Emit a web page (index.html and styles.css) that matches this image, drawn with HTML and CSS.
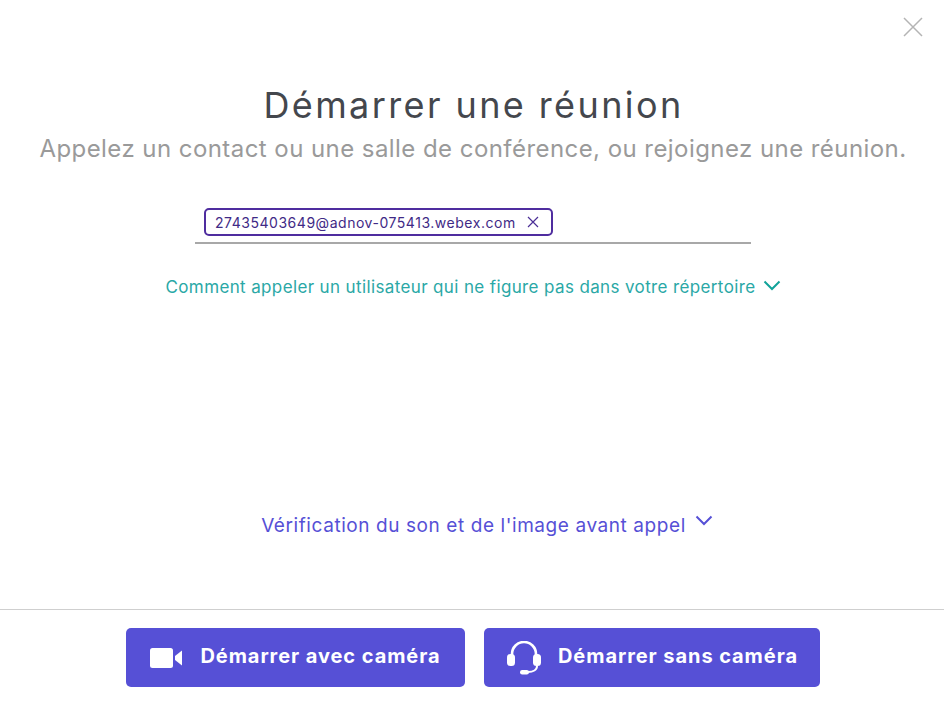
FILE: index.html
```html
<!DOCTYPE html>
<html lang="fr">
<head>
<meta charset="utf-8">
<title>Démarrer une réunion</title>
<link rel="stylesheet" href="styles.css">
</head>
<body>
<div class="dialog">
  <button class="close" aria-label="Fermer">
    <svg width="20" height="20" viewBox="0 0 20 20"><path d="M1 1 19 19M19 1 1 19" stroke="#b4b4b4" stroke-width="1.5" fill="none"/></svg>
  </button>
  <main class="main">
    <h1 class="title">Démarrer une réunion</h1>
    <p class="subtitle">Appelez un contact ou une salle de conférence, ou rejoignez une réunion.</p>
    <div class="field">
      <span class="chip">
        <span class="chip-text">27435403649@adnov-075413.webex.com</span>
        <svg class="chip-x" width="12" height="12" viewBox="0 0 12 12"><path d="M1 1 11 11M11 1 1 11" stroke="#4b2f96" stroke-width="1.2" fill="none"/></svg>
      </span>
    </div>
    <a class="link link-teal">Comment appeler un utilisateur qui ne figure pas dans votre répertoire
      <svg width="18" height="11" viewBox="0 0 18 11"><path d="M1.500 1.500 9 9l7.500-7.500" stroke="#12a39a" stroke-width="2" fill="none"/></svg>
    </a>
    <a class="link link-purple">Vérification du son et de l'image avant appel
      <svg width="18" height="11" viewBox="0 0 18 11"><path d="M1.500 1.500 9 9l7.500-7.500" stroke="#5650d6" stroke-width="2" fill="none"/></svg>
    </a>
  </main>
  <footer class="footer">
    <button class="btn btn-video">
      <svg width="33" height="20" viewBox="0 0 33 20"><rect x="0" y="0" width="23" height="20" rx="2.500" fill="#fff"/><path d="M25 8 32 2.500V17.500L25 12Z" fill="#fff"/></svg>
      <span class="btn-label">Démarrer avec caméra</span>
    </button>
    <button class="btn btn-audio">
      <svg width="36" height="34" viewBox="0 0 36 34"><path d="M6 16V13a12 12 0 0 1 24 0v3" stroke="#fff" stroke-width="2.600" fill="none"/><rect x="1" y="13" width="8" height="12" rx="3.500" fill="#fff"/><rect x="27" y="13" width="8" height="12" rx="3.500" fill="#fff"/><path d="M31 25c0 4-4 6-9 6" stroke="#fff" stroke-width="2" fill="none"/><rect x="14" y="29" width="9" height="4.500" rx="2.200" fill="#fff"/></svg>
      <span class="btn-label">Démarrer sans caméra</span>
    </button>
  </footer>
</div>
</body>
</html>
```

FILE: styles.css
```css
* { box-sizing: border-box; }
html, body { margin: 0; height: 100%; }
body { font-family: Inter, "Noto Sans", sans-serif; background: #fff; overflow: hidden; }
.dialog { position: relative; height: 705px; display: flex; flex-direction: column; }
.close { position: absolute; top: 17px; right: 21px; padding: 0; border: 0; background: none; line-height: 0; }
.main { flex: 1; display: flex; flex-direction: column; align-items: center; padding-top: 81px; }
.title { margin: 0 0 0 3px; font-size: 36px; line-height: 48px; font-weight: 400; color: #44474d; letter-spacing: 2.4px; }
.subtitle { margin: 0 0 0 2px; font-size: 24px; line-height: 40px; color: #9a9a9a; letter-spacing: 0.44px; }
.field { align-self: flex-start; width: 556px; margin: 40px 0 0 195px; height: 35px; border-bottom: 2px solid #a8a8a8; padding-left: 9px; }
.chip { display: inline-flex; align-items: center; gap: 11px; height: 28px; margin-top: -1px; padding: 0 12px 0 9px; border: 2px solid #4f2d9f; border-radius: 5px; vertical-align: top; }
.chip-text { font-size: 14px; letter-spacing: 0.53px; color: #3f2a86; }
.link { display: flex; align-items: center; gap: 8px; line-height: 24px; }
.link-teal { font-size: 17px; letter-spacing: 0.37px; color: #2aa8a6; margin: 31px 0 0 3px; }
.link-purple { font-size: 19px; letter-spacing: 0.58px; color: #5650d6; margin: 215px 0 0 30px; gap: 9px; }
.link-teal svg { margin-top: -3px; }
.link-purple svg { margin-top: -11px; }
.footer { height: 96px; border-top: 1px solid #cfcfcf; display: flex; justify-content: center; gap: 19px; padding: 18px 0 0 2px; }
.btn { display: flex; align-items: center; justify-content: center; height: 59px; border: 0; border-radius: 5px; background: #5650d6; color: #fff; font-family: inherit; font-size: 20px; font-weight: 700; letter-spacing: 0.93px; }
.btn-label { position: relative; top: -2px; }
.btn-video { width: 339px; gap: 17px; }
.btn-audio { width: 336px; gap: 16px; }
```
